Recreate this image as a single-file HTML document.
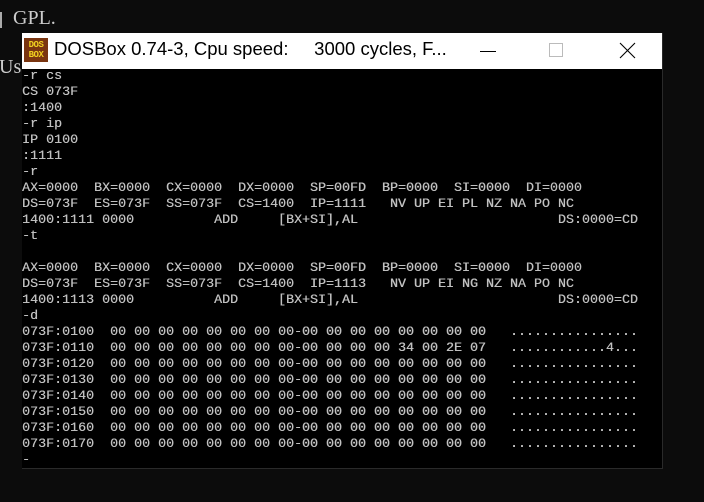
<!DOCTYPE html>
<html><head><meta charset="utf-8"><style>
html,body{margin:0;padding:0;background:#0c0c0c;width:704px;height:502px;overflow:hidden;position:relative}
.bg{position:absolute;color:#cccccc;font-family:"Liberation Serif",serif;font-size:20px;white-space:pre}
.win{position:absolute;left:22px;top:33px;width:641px;height:436px;background:#000;border-right:1px solid #2a2a2a;border-bottom:1px solid #2a2a2a;box-sizing:border-box}
.title{position:absolute;left:0;top:0;width:640px;height:36px;background:#fff}
.icon{position:absolute;left:2px;top:5px;width:24px;height:24px;background:#7a3510;color:#f0d020;font:bold 9px/10px "Liberation Mono",monospace;text-align:center;padding-top:2px;box-sizing:border-box;letter-spacing:-0.5px}
.tt{position:absolute;left:32px;top:5px;font-family:"Liberation Sans",sans-serif;font-size:18.5px;color:#000;white-space:pre}
.term{position:absolute;left:0;top:36px;margin:0;font-family:"Liberation Mono",monospace;font-size:13.33px;line-height:16px;color:#c0c0c0;white-space:pre;text-shadow:0.3px 0 0 #c0c0c0}
</style></head><body>
<div style="position:absolute;left:0;top:12px;width:2px;height:16px;background:#aaa"></div>
<div class="bg" style="left:13px;top:7px">GPL.</div>
<div class="bg" style="left:-1px;top:56px">Us</div>
<div class="win">
<div class="title">
<div class="icon">DOS<br>BOX</div>
<div class="tt">DOSBox 0.74-3, Cpu speed:     3000 cycles, F...</div>
<div style="position:absolute;left:458px;top:18px;width:16px;height:1px;background:#000"></div>
<div style="position:absolute;left:527px;top:10px;width:14px;height:14px;border:1px solid #bbb;box-sizing:border-box"></div>
<svg style="position:absolute;left:597px;top:9px" width="17" height="17"><path d="M1 1L16 16M16 1L1 16" stroke="#000" stroke-width="1.1"/></svg>
</div>
<pre class="term">-r cs
CS 073F
:1400
-r ip
IP 0100
:1111
-r
AX=0000  BX=0000  CX=0000  DX=0000  SP=00FD  BP=0000  SI=0000  DI=0000
DS=073F  ES=073F  SS=073F  CS=1400  IP=1111   NV UP EI PL NZ NA PO NC
1400:1111 0000          ADD     [BX+SI],AL                         DS:0000=CD
-t

AX=0000  BX=0000  CX=0000  DX=0000  SP=00FD  BP=0000  SI=0000  DI=0000
DS=073F  ES=073F  SS=073F  CS=1400  IP=1113   NV UP EI NG NZ NA PO NC
1400:1113 0000          ADD     [BX+SI],AL                         DS:0000=CD
-d
073F:0100  00 00 00 00 00 00 00 00-00 00 00 00 00 00 00 00   ................
073F:0110  00 00 00 00 00 00 00 00-00 00 00 00 34 00 2E 07   ............4...
073F:0120  00 00 00 00 00 00 00 00-00 00 00 00 00 00 00 00   ................
073F:0130  00 00 00 00 00 00 00 00-00 00 00 00 00 00 00 00   ................
073F:0140  00 00 00 00 00 00 00 00-00 00 00 00 00 00 00 00   ................
073F:0150  00 00 00 00 00 00 00 00-00 00 00 00 00 00 00 00   ................
073F:0160  00 00 00 00 00 00 00 00-00 00 00 00 00 00 00 00   ................
073F:0170  00 00 00 00 00 00 00 00-00 00 00 00 00 00 00 00   ................
-</pre>
</div>
</body></html>
